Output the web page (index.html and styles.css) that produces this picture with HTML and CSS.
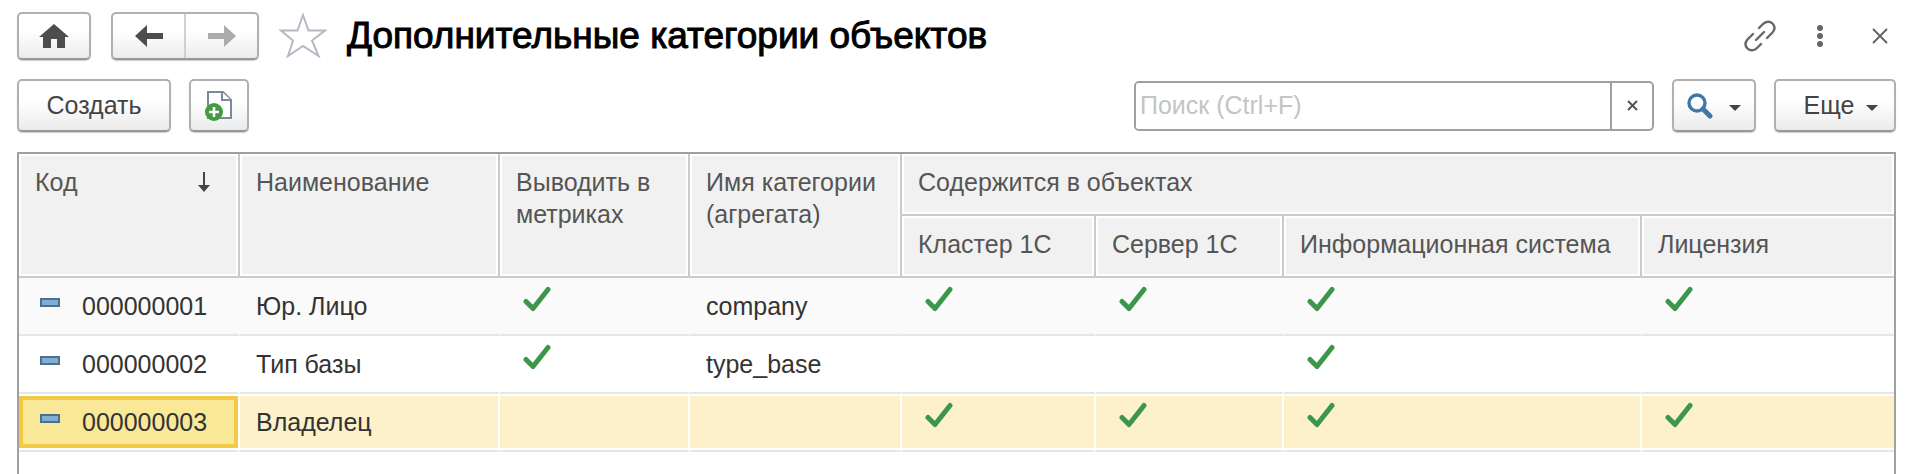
FILE: index.html
```html
<!DOCTYPE html>
<html lang="ru">
<head>
    <meta charset="UTF-8">
    <meta name="viewport" content="width=device-width, initial-scale=1.0">
    <title>Дополнительные категории объектов</title>
    <link rel="stylesheet" href="styles.css">
</head>
<body>
    <!-- Shared icons -->
    <svg class="sprite" aria-hidden="true">
        <symbol id="check" viewBox="0 0 28 26">
            <path d="M3 15.5 L10 22.5 L25 3.5" fill="none" stroke="#3c964c" stroke-width="5" stroke-linecap="round" stroke-linejoin="round"/>
        </symbol>
        <symbol id="item" viewBox="0 0 20 9">
            <rect x="1" y="1" width="18" height="7" fill="#82aed6" stroke="#4c6f8c" stroke-width="2"/>
        </symbol>
        <symbol id="caret" viewBox="0 0 12 6">
            <path d="M0 0 H12 L6 6 Z" fill="#444"/>
        </symbol>
    </svg>

    <header class="titlebar">
        <button class="btn btn-home" type="button" aria-label="Начальная страница">
            <svg width="30" height="26" viewBox="0 0 30 26"><path d="M15 1 L30 14 H26 V25 H18 V16 H12 V25 H4 V14 H0 Z" fill="#4d4d4d"/></svg>
        </button>
        <div class="nav">
            <button class="nav-btn" type="button" aria-label="Назад">
                <svg width="28" height="22" viewBox="0 0 28 22"><path d="M0 11 L12 0 V8 H28 V14 H12 V22 Z" fill="#4d4d4d"/></svg>
            </button>
            <button class="nav-btn" type="button" aria-label="Вперед">
                <svg width="28" height="22" viewBox="0 0 28 22"><path d="M28 11 L16 0 V8 H0 V14 H16 V22 Z" fill="#acacac"/></svg>
            </button>
        </div>
        <button class="icon-btn" type="button" aria-label="В избранное">
            <svg width="48" height="46" viewBox="0 0 48 46"><path d="M24 2 L29.500 17.500 H46 L33 27.500 L39.500 43 L24 33 L9 43 L14 27.500 L2 17.500 H18.500 Z" fill="#fff" stroke="#b4bac2" stroke-width="2"/></svg>
        </button>
        <h1>Дополнительные категории объектов</h1>
        <div class="window-tools">
            <button class="icon-btn" type="button" aria-label="Получить ссылку">
                <svg width="32" height="32" viewBox="0 0 32 32" fill="none" stroke="#666" stroke-width="2.400" stroke-linecap="round">
                    <path d="M15 8 L19 4 C22 1 26 1 28.500 3.500 C31 6 31 9.500 28.500 12.500 L23 18"/>
                    <path d="M17 24 L13 28 C10 31 6 31 3.500 28.500 C1 26 1 22.500 3.500 19.500 L9 14"/>
                    <path d="M12 20 L20 12"/>
                </svg>
            </button>
            <button class="icon-btn" type="button" aria-label="Меню">
                <svg width="8" height="24" viewBox="0 0 8 24" fill="#666"><circle cx="4" cy="4" r="3"/><circle cx="4" cy="12" r="3"/><circle cx="4" cy="20" r="3"/></svg>
            </button>
            <button class="icon-btn close" type="button" aria-label="Закрыть">
                <svg width="16" height="16" viewBox="0 0 16 16"><path d="M1 1 L15 15 M15 1 L1 15" stroke="#666" stroke-width="2"/></svg>
            </button>
        </div>
    </header>

    <div class="toolbar">
        <button class="btn btn-create" type="button">Создать</button>
        <button class="btn btn-copy" type="button" aria-label="Скопировать">
            <svg width="28" height="32" viewBox="0 0 28 32">
                <path d="M3 2 H18 L26 10 V28 H3 Z" fill="#fff" stroke="#7a8a9c" stroke-width="2"/>
                <path d="M17 2 V10 H26" fill="#fff" stroke="#7a8a9c" stroke-width="2"/>
                <circle cx="9" cy="22" r="9" fill="#439a3f"/>
                <path d="M9 17 V27 M4 22 H14" stroke="#fff" stroke-width="2.600"/>
            </svg>
        </button>
        <div class="search">
            <input type="text" placeholder="Поиск (Ctrl+F)" aria-label="Поиск">
            <button type="button" aria-label="Очистить">
                <svg width="11" height="11" viewBox="0 0 11 11"><path d="M1 1 L10 10 M10 1 L1 10" stroke="#555" stroke-width="2"/></svg>
            </button>
        </div>
        <button class="btn btn-find" type="button" aria-label="Найти">
            <svg width="26" height="26" viewBox="0 0 26 26"><circle cx="10" cy="10" r="8" fill="none" stroke="#4077a8" stroke-width="3.400"/><path d="M16 16 L23 23" stroke="#4077a8" stroke-width="5" stroke-linecap="round"/></svg>
            <svg class="caret"><use href="#caret"/></svg>
        </button>
        <button class="btn btn-more" type="button">Еще <svg class="caret"><use href="#caret"/></svg></button>
    </div>

    <main class="list">
        <table>
            <colgroup>
                <col class="c-code">
                <col class="c-name">
                <col class="c-metric">
                <col class="c-category">
                <col class="c-cluster">
                <col class="c-server">
                <col class="c-system">
                <col>
            </colgroup>
            <thead>
                <tr>
                    <th rowspan="2" scope="col">
                        <div class="sorted">Код
                            <svg width="12" height="22" viewBox="0 0 12 22"><path d="M6 1 V18" stroke="#444" stroke-width="2"/><path d="M0 14 H12 L6 21 Z" fill="#444"/></svg>
                        </div>
                    </th>
                    <th rowspan="2" scope="col">Наименование</th>
                    <th rowspan="2" scope="col">Выводить в метриках</th>
                    <th rowspan="2" scope="col">Имя категории (агрегата)</th>
                    <th colspan="4" scope="colgroup">Содержится в объектах</th>
                </tr>
                <tr>
                    <th scope="col">Кластер 1С</th>
                    <th scope="col">Сервер 1С</th>
                    <th scope="col">Информационная система</th>
                    <th scope="col">Лицензия</th>
                </tr>
            </thead>
            <tbody>
                <tr class="odd">
                    <td><svg class="item"><use href="#item"/></svg>000000001</td>
                    <td>Юр. Лицо</td>
                    <td><svg class="check" role="img" aria-label="Да"><use href="#check"/></svg></td>
                    <td>company</td>
                    <td><svg class="check" role="img" aria-label="Да"><use href="#check"/></svg></td>
                    <td><svg class="check" role="img" aria-label="Да"><use href="#check"/></svg></td>
                    <td><svg class="check" role="img" aria-label="Да"><use href="#check"/></svg></td>
                    <td><svg class="check" role="img" aria-label="Да"><use href="#check"/></svg></td>
                </tr>
                <tr>
                    <td><svg class="item"><use href="#item"/></svg>000000002</td>
                    <td>Тип базы</td>
                    <td><svg class="check" role="img" aria-label="Да"><use href="#check"/></svg></td>
                    <td>type_base</td>
                    <td></td>
                    <td></td>
                    <td><svg class="check" role="img" aria-label="Да"><use href="#check"/></svg></td>
                    <td></td>
                </tr>
                <tr class="selected">
                    <td class="current"><svg class="item"><use href="#item"/></svg>000000003</td>
                    <td>Владелец</td>
                    <td></td>
                    <td></td>
                    <td><svg class="check" role="img" aria-label="Да"><use href="#check"/></svg></td>
                    <td><svg class="check" role="img" aria-label="Да"><use href="#check"/></svg></td>
                    <td><svg class="check" role="img" aria-label="Да"><use href="#check"/></svg></td>
                    <td><svg class="check" role="img" aria-label="Да"><use href="#check"/></svg></td>
                </tr>
            </tbody>
        </table>
    </main>
</body>
</html>
```
FILE: styles.css
```css
* {
    margin: 0;
    padding: 0;
    box-sizing: border-box;
}

body {
    display: flex;
    flex-direction: column;
    min-height: 100vh;
    padding: 12px 16px 0 17px;
    background-color: #fff;
    color: #333;
    font-family: "Liberation Sans", Arial, sans-serif;
    font-size: 25px;
}

button,
input {
    font: inherit;
    color: #444;
}

button {
    border: none;
    background: none;
    cursor: pointer;
}

svg {
    display: block;
    flex: none;
}

.sprite {
    position: absolute;
    width: 0;
    height: 0;
}

/* Title row */
.titlebar {
    display: flex;
    align-items: center;
    height: 48px;
}

.btn,
.nav {
    display: flex;
    align-items: center;
    justify-content: center;
    border: 2px solid #b0b0b0;
    border-bottom-color: #989898;
    border-radius: 5px;
    background: linear-gradient(#fff 40%, #ebebeb);
    box-shadow: 0 1px 1px #ccc;
}

.btn-home {
    width: 74px;
    height: 48px;
}

.nav {
    width: 148px;
    height: 48px;
    margin: 0 20px;
}

.nav-btn {
    display: flex;
    flex: 1;
    align-items: center;
    justify-content: center;
    height: 100%;
}

.nav-btn + .nav-btn {
    border-left: 2px solid #d0d0d0;
}

h1 {
    margin-left: 20px;
    color: #000;
    font-size: 37px;
    font-weight: normal;
    line-height: 48px;
    white-space: nowrap;
    -webkit-text-stroke: 1px #000;
}

.window-tools {
    display: flex;
    align-items: center;
    gap: 40px;
    margin-left: auto;
    padding-right: 8px;
}

.close {
    margin-left: 8px;
}

/* Command bar */
.toolbar {
    display: flex;
    align-items: center;
    margin: 19px 0 20px;
}

.toolbar .btn {
    height: 53px;
}

.btn-create {
    width: 154px;
}

.btn-copy {
    width: 60px;
    margin-left: 18px;
}

.search {
    display: flex;
    width: 520px;
    height: 50px;
    margin: 0 18px 0 auto;
    border: 2px solid #a0a0a0;
    border-radius: 5px;
    overflow: hidden;
}

.search input {
    flex: 1;
    min-width: 0;
    padding-left: 4px;
    border: none;
    outline: none;
}

.search input::placeholder {
    color: #c4c4c4;
}

.search button {
    display: flex;
    align-items: center;
    justify-content: center;
    width: 42px;
    border-left: 2px solid #a0a0a0;
}

.btn-find {
    gap: 16px;
    width: 84px;
    margin-right: 18px;
}

.btn-more {
    gap: 12px;
    width: 122px;
    padding-left: 12px;
}

.caret {
    width: 12px;
    height: 6px;
    margin-top: 4px;
}

/* List */
.list {
    flex: 1;
    border: 2px solid #a0a0a0;
    border-bottom: none;
}

table {
    width: 100%;
    table-layout: fixed;
    border-collapse: separate;
    border-spacing: 0;
}

.c-code { width: 221px; }
.c-name { width: 260px; }
.c-metric { width: 190px; }
.c-category { width: 212px; }
.c-cluster { width: 194px; }
.c-server { width: 188px; }
.c-system { width: 358px; }

th {
    height: 62px;
    padding: 12px 8px 12px 16px;
    border-right: 2px solid #cacaca;
    border-bottom: 2px solid #cacaca;
    background-color: #f1f1f1;
    box-shadow: inset 0 0 0 2px #fff;
    color: #555;
    font-weight: normal;
    line-height: 32px;
    text-align: left;
    vertical-align: top;
}

th:last-child {
    border-right: none;
}

.sorted {
    display: flex;
    align-items: center;
    justify-content: space-between;
    padding-right: 20px;
}

td {
    height: 58px;
    padding: 8px 16px;
    border-right: 2px solid transparent;
    border-bottom: 2px solid #e6e6e6;
    line-height: 40px;
    vertical-align: top;
    white-space: nowrap;
}

td:last-child {
    border-right: none;
}

.odd td {
    background-color: #fafafa;
}

.selected td {
    border-right-color: #fff;
    background-color: #fcf1cb;
    box-shadow: inset 0 2px #fff, inset 0 -2px #fff;
}

.selected .current {
    background-color: #fae899;
    box-shadow: inset 0 2px #fff, inset 0 -2px #fff, inset 0 6px #f3ca45, inset 0 -6px #f3ca45, inset 4px 0 #f3ca45, inset -4px 0 #f3ca45;
}

.item {
    display: inline-block;
    width: 20px;
    height: 9px;
    margin: 0 22px 8px 5px;
    vertical-align: baseline;
}

.check {
    width: 28px;
    height: 26px;
    margin-left: 7px;
}
```
